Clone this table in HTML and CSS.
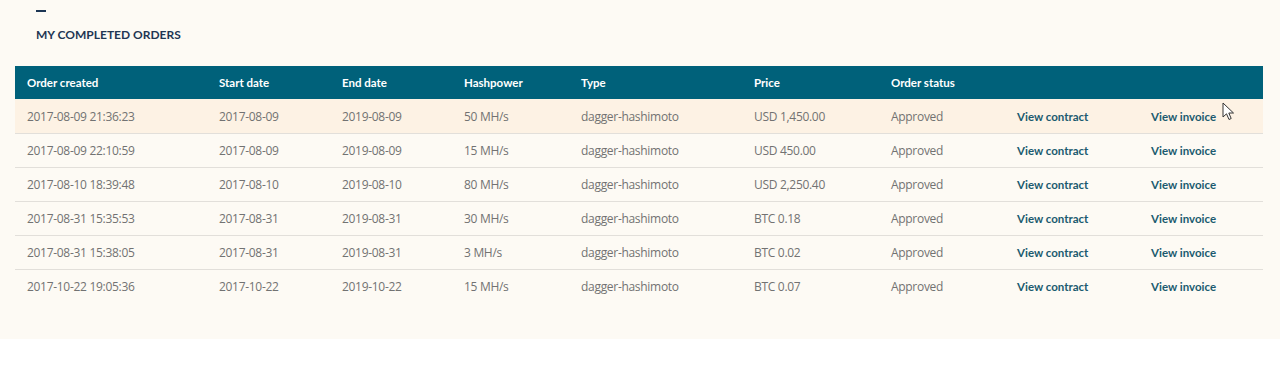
FILE: index.html
```html
<!DOCTYPE html>
<html lang="en">
<head>
<meta charset="utf-8">
<title>My completed orders</title>
<link rel="stylesheet" href="styles.css">
</head>
<body>
<main class="page">
  <section class="orders">
    <div class="title-block">
      <span class="dash"></span>
      <h2 class="title">MY COMPLETED ORDERS</h2>
    </div>
    <table class="table">
      <colgroup>
        <col class="c1"><col class="c2"><col class="c3"><col class="c4"><col class="c5"><col class="c6"><col class="c7"><col class="c8"><col class="c9">
      </colgroup>
      <thead>
        <tr>
          <th>Order created</th><th>Start date</th><th>End date</th><th>Hashpower</th><th>Type</th><th>Price</th><th>Order status</th><th></th><th></th>
        </tr>
      </thead>
      <tbody>
        <tr class="hover">
          <td>2017-08-09 21:36:23</td><td>2017-08-09</td><td>2019-08-09</td><td>50 MH/s</td><td>dagger-hashimoto</td><td>USD 1,450.00</td><td>Approved</td><td><a class="link">View contract</a></td><td><a class="link">View invoice</a></td>
        </tr>
        <tr>
          <td>2017-08-09 22:10:59</td><td>2017-08-09</td><td>2019-08-09</td><td>15 MH/s</td><td>dagger-hashimoto</td><td>USD 450.00</td><td>Approved</td><td><a class="link">View contract</a></td><td><a class="link">View invoice</a></td>
        </tr>
        <tr>
          <td>2017-08-10 18:39:48</td><td>2017-08-10</td><td>2019-08-10</td><td>80 MH/s</td><td>dagger-hashimoto</td><td>USD 2,250.40</td><td>Approved</td><td><a class="link">View contract</a></td><td><a class="link">View invoice</a></td>
        </tr>
        <tr>
          <td>2017-08-31 15:35:53</td><td>2017-08-31</td><td>2019-08-31</td><td>30 MH/s</td><td>dagger-hashimoto</td><td>BTC 0.18</td><td>Approved</td><td><a class="link">View contract</a></td><td><a class="link">View invoice</a></td>
        </tr>
        <tr>
          <td>2017-08-31 15:38:05</td><td>2017-08-31</td><td>2019-08-31</td><td>3 MH/s</td><td>dagger-hashimoto</td><td>BTC 0.02</td><td>Approved</td><td><a class="link">View contract</a></td><td><a class="link">View invoice</a></td>
        </tr>
        <tr>
          <td>2017-10-22 19:05:36</td><td>2017-10-22</td><td>2019-10-22</td><td>15 MH/s</td><td>dagger-hashimoto</td><td>BTC 0.07</td><td>Approved</td><td><a class="link">View contract</a></td><td><a class="link">View invoice</a></td>
        </tr>
      </tbody>
    </table>
  </section>
  <svg class="cursor" width="13" height="20" viewBox="0 0 13 20" aria-hidden="true">
    <path d="M1 1 L1 15 L4.5 11.8 L7 17.5 L9.2 16.5 L6.8 11 L11.5 11 Z" fill="#fff" stroke="#333" stroke-width="1" stroke-linejoin="round"/>
  </svg>
</main>
</body>
</html>
```

FILE: styles.css
```css
* { box-sizing: border-box; }

html, body {
  margin: 0;
  padding: 0;
  background: #ffffff;
}

body {
  font-family: "Open Sans", "DejaVu Sans", sans-serif;
}

.page {
  position: relative;
  width: 1280px;
}

.orders {
  background: #fdfaf4;
  padding: 10px 17px 36px 15px;
}

.title-block {
  padding-left: 21px;
  display: flex;
  flex-direction: column;
  align-items: flex-start;
}

.dash {
  display: block;
  width: 10px;
  height: 2px;
  background: #1c3553;
}

.title {
  margin: 15px 0 0;
  font-family: Lato, "Open Sans", sans-serif;
  font-weight: 700;
  font-size: 12px;
  line-height: 16px;
  letter-spacing: 0;
  color: #1f3653;
}

.table {
  margin-top: 23px;
  width: 1248px;
  border-collapse: collapse;
  table-layout: fixed;
}

.c1 { width: 192px; }
.c2 { width: 123px; }
.c3 { width: 122px; }
.c4 { width: 117px; }
.c5 { width: 173px; }
.c6 { width: 137px; }
.c7 { width: 126px; }
.c8 { width: 134px; }
.c9 { width: 124px; }

.table thead tr {
  background: #00617a;
}

.table th {
  height: 33px;
  padding: 0 0 0 12px;
  text-align: left;
  font-family: Lato, "Open Sans", sans-serif;
  font-weight: 700;
  font-size: 11.5px;
  color: #ffffff;
  white-space: nowrap;
}

.table td {
  height: 34px;
  padding: 1px 0 0 12px;
  font-size: 12px;
  font-weight: 400;
  letter-spacing: -0.3px;
  color: #727272;
  white-space: nowrap;
  border-bottom: 1px solid #e2dfda;
}

.table tbody tr:last-child td {
  border-bottom: none;
}

.table tr.hover {
  background: #fdf2e4;
}

.link {
  font-family: Lato, "Open Sans", sans-serif;
  font-weight: 700;
  font-size: 11.5px;
  letter-spacing: 0;
  color: #1b5a6f;
  text-decoration: none;
}

.cursor {
  position: absolute;
  left: 1222px;
  top: 102px;
}
```
